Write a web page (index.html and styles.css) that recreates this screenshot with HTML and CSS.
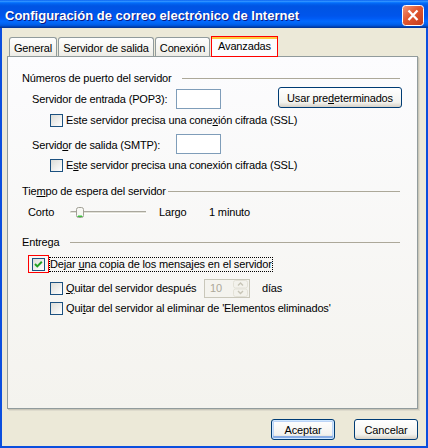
FILE: index.html
```html
<html>
<head>
    <title>Configuración de correo electrónico de Internet</title>
    <link rel="stylesheet" href="styles.css">
</head>
<body>

    <div class="window">
        <div class="titlebar">
            <span class="title">Configuración de correo electrónico de Internet</span>
            <span class="close">
                <svg width="22" height="21" viewBox="0 0 22 21">
                    <defs>
                        <linearGradient id="closeBg" x1="0" y1="0" x2="1" y2="1">
                            <stop offset="0" stop-color="#F29A7E"/>
                            <stop offset="0.45" stop-color="#E1572F"/>
                            <stop offset="1" stop-color="#C33A1A"/>
                        </linearGradient>
                    </defs>
                    <rect x="0.5" y="0.5" width="21" height="20" rx="3" fill="url(#closeBg)" stroke="#fff"/>
                    <path d="M6.5 5.5l9 9.5M15.5 5.5l-9 9.5" stroke="#fff" stroke-width="2.3"/>
                </svg>
            </span>
        </div>

        <div class="frame">
            <div class="tabs">
                <div class="tab general">General</div>
                <div class="tab outgoing">Servidor de salida</div>
                <div class="tab connection">Conexión</div>
                <div class="tab active">Avanzadas</div>
            </div>

            <div class="panel">
                <div class="group-head">
                    <span class="group-label ports">Números de puerto del servidor</span>
                    <span class="group-line"></span>
                </div>

                <div class="port-row first">
                    <span class="port-label">Servidor de entrada (POP3):</span>
                    <span class="textbox"></span>
                    <button class="btn defaults">Usar pre<u>d</u>eterminados</button>
                </div>
                <div class="check-row sub ssl-in">
                    <span class="cb"></span>
                    <span>Este servidor precisa una cone<u>x</u>ión cifrada (SSL)</span>
                </div>

                <div class="port-row second">
                    <span class="port-label">Servid<u>o</u>r de salida (SMTP):</span>
                    <span class="textbox"></span>
                </div>
                <div class="check-row sub ssl-out">
                    <span class="cb"></span>
                    <span>E<u>s</u>te servidor precisa una conexión cifrada (SSL)</span>
                </div>

                <div class="group-head timeout">
                    <span class="group-label wait">Tie<u>m</u>po de espera del servidor</span>
                    <span class="group-line"></span>
                </div>
                <div class="slider-row">
                    <span class="slider-short">Corto</span>
                    <span class="track">
                        <svg class="thumb" width="8" height="11" viewBox="0 0 8 11">
                            <rect x="0.5" y="0.5" width="7" height="10" rx="2" fill="#F7F7F3" stroke="#A19F95"/>
                            <path d="M1.5 9.5h5" stroke="#3DBE3D"/>
                            <path d="M2 8.5h4" stroke="#9BDB9B"/>
                        </svg>
                    </span>
                    <span class="slider-long">Largo</span>
                    <span>1 minuto</span>
                </div>

                <div class="group-head delivery">
                    <span class="group-label deliver">Entrega</span>
                    <span class="group-line"></span>
                </div>
                <div class="check-row keep">
                    <span class="mark">
                        <span class="cb">
                            <svg width="11" height="11" viewBox="0 0 11 11">
                                <path d="M2 5l2.3 2.4L8.8 2.8" fill="none" stroke="#21A121" stroke-width="2"/>
                            </svg>
                        </span>
                    </span>
                    <span class="focus">Dejar <u>u</u>na copia de los mensajes en el servidor</span>
                </div>
                <div class="check-row sub after-days">
                    <span class="cb"></span>
                    <span class="days-label"><u>Q</u>uitar del servidor después</span>
                    <span class="spin">
                        <span>10</span>
                        <svg class="spin-btns" width="15" height="17" viewBox="0 0 15 17">
                            <rect x="0.5" y="0.5" width="14" height="7.5" rx="2" fill="#F3F2EC" stroke="#E3E1D7"/>
                            <rect x="0.5" y="9" width="14" height="7.5" rx="2" fill="#F3F2EC" stroke="#E3E1D7"/>
                            <path d="M5 5.5l2.5-2.5 2.5 2.5M5 11l2.5 2.5 2.5-2.5" fill="none" stroke="#C7C4B6" stroke-width="1.4"/>
                        </svg>
                    </span>
                    <span class="days">días</span>
                </div>
                <div class="check-row sub on-delete">
                    <span class="cb"></span>
                    <span>Qui<u>t</u>ar del servidor al eliminar de 'Elementos eliminados'</span>
                </div>
            </div>

            <div class="buttons">
                <button class="btn default">Aceptar</button>
                <button class="btn">Cancelar</button>
            </div>
        </div>
    </div>

</body>
</html>
```

FILE: styles.css
```css
* {
    box-sizing: border-box;
}
body {
    margin: 0;
    font-family: "Liberation Sans", Arial, sans-serif;
    font-size: 11px;
    letter-spacing: -0.15px;
    color: #000;
}
u {
    text-decoration: underline;
}
.window {
    width: 428px;
    height: 448px;
    display: flex;
    flex-direction: column;
}

/* title bar */
.titlebar {
    height: 28px;
    flex: none;
    display: flex;
    align-items: flex-start;
    background: linear-gradient(to bottom, #0058EE 0%, #3593FF 4%, #288EFF 6%, #127DFF 8%, #036FFC 10%, #0262EE 14%, #0057E5 20%, #0054E3 24%, #0055EB 56%, #005BF5 66%, #026AFE 76%, #0062EF 86%, #0052D6 92%, #0040AB 96%, #003092 100%);
}
.title {
    margin-top: 8px;
    padding-left: 5px;
    font-size: 13px;
    line-height: 16px;
    font-weight: bold;
    letter-spacing: 0;
    color: #fff;
    text-shadow: 1px 1px 0 #0A1883;
}
.close {
    margin: 5px 4px 0 auto;
    width: 22px;
    height: 21px;
}
.close svg {
    display: block;
}

/* window body */
.frame {
    flex: 1;
    display: flex;
    flex-direction: column;
    background: #ECE9D8;
    border: 2px solid #0B4EDE;
    border-top: 0;
}
.tabs {
    position: relative;
    display: flex;
    align-items: flex-end;
    height: 29px;
    margin-bottom: -1px;
    padding: 8px 0 0 7px;
}
.tab {
    height: 19px;
    margin: 0 1px 1px 0;
    padding-top: 4px;
    line-height: 13px;
    text-align: center;
    white-space: nowrap;
    border: 1px solid #919B9C;
    border-bottom: 0;
    border-radius: 3px 3px 0 0;
    background: linear-gradient(#FEFEFE, #F4F3EE 70%, #ECEBE6);
}
.tab.general {
    width: 48px;
}
.tab.outgoing {
    width: 96px;
}
.tab.connection {
    width: 55px;
}
.tab.active {
    width: 67px;
    height: 21px;
    margin: 0;
    padding-top: 3px;
    border: 1px solid #f00;
    border-radius: 0;
    background: #FCFCFE;
    box-shadow: inset 0 2px 0 #FFC83C;
}
.panel {
    flex: none;
    width: 411px;
    height: 353px;
    margin-left: 5px;
    padding-top: 15px;
    border: 1px solid #919B9C;
    background: linear-gradient(#FCFCFE, #F4F3EE);
    box-shadow: 1px 1px 0 #C9C6B8, 2px 2px 0 #DEDBCD;
}

/* group headings with an etched line */
.group-head {
    display: flex;
    align-items: center;
    height: 13px;
    line-height: 13px;
    padding: 0 17px 0 14px;
}
.group-label {
    flex: none;
    white-space: nowrap;
}
.group-label.ports {
    width: 160px;
}
.group-label.wait {
    width: 146px;
}
.group-label.deliver {
    width: 48px;
}
.group-line {
    flex: 1;
    height: 1px;
    background: #ACA899;
}
.group-head.timeout {
    margin-top: 13px;
}
.group-head.delivery {
    margin-top: 17px;
}

/* port rows */
.port-row {
    display: flex;
    align-items: flex-start;
    padding: 0 15px 0 24px;
}
.port-row.first {
    margin-top: 2px;
}
.port-row.second {
    margin-top: 7px;
}
.port-label {
    width: 144px;
    line-height: 20px;
    margin-top: 1px;
    white-space: nowrap;
}
.port-row.first .port-label,
.port-row.first .textbox {
    margin-top: 2px;
}
.textbox {
    width: 45px;
    height: 20px;
    border: 1px solid #7F9DB9;
    background: #fff;
}
.btn {
    height: 21px;
    padding: 0;
    font: inherit;
    letter-spacing: inherit;
    color: #000;
    border: 1px solid #003C74;
    border-radius: 3px;
    background: linear-gradient(#FFFFFF, #F3F3EF 75%, #D6D0C5);
}
.btn.defaults {
    width: 124px;
    margin-left: auto;
}

/* checkbox rows */
.check-row {
    display: flex;
    align-items: center;
    height: 13px;
    line-height: 13px;
    white-space: nowrap;
}
.check-row.sub {
    padding-left: 42px;
}
.check-row.ssl-in {
    margin-top: 5px;
}
.check-row.ssl-out {
    margin-top: 4px;
}
.cb {
    flex: none;
    display: block;
    width: 13px;
    height: 13px;
    margin-right: 3px;
    border: 1px solid #1C5180;
    background: linear-gradient(135deg, #DCDCD7, #FFFFFF);
}
.cb svg {
    display: block;
}
.check-row.keep {
    height: 18px;
    margin-top: 6px;
    padding-left: 20px;
}
.mark {
    flex: none;
    display: flex;
    padding: 2px 3px 1px;
    border: 1px solid #f00;
}
.mark .cb {
    margin-right: 0;
}
.focus {
    padding: 1px 1px;
    outline: 1px dotted #000;
    outline-offset: -1px;
}
.check-row.after-days {
    height: 19px;
    margin-top: 6px;
}
.days-label {
    width: 138px;
}
.spin {
    flex: none;
    display: flex;
    align-items: center;
    width: 46px;
    height: 19px;
    padding-left: 5px;
    color: #ACA899;
    border: 1px solid #C9C7BA;
    background: #F4F3EE;
}
.spin-btns {
    margin-left: auto;
    margin-right: 1px;
}
.days {
    margin-left: 12px;
}
.check-row.on-delete {
    margin-top: 4px;
}

/* timeout slider */
.slider-row {
    display: flex;
    align-items: center;
    height: 13px;
    line-height: 13px;
    margin-top: 8px;
    padding-left: 20px;
}
.slider-short {
    width: 42px;
}
.track {
    position: relative;
    width: 76px;
    height: 3px;
    border-top: 1px solid #A9A79D;
    border-bottom: 1px solid #fff;
    border-radius: 2px 0 0 2px;
    background: #E2E1D8;
}
.thumb {
    position: absolute;
    left: 6px;
    top: -5px;
}
.slider-long {
    width: 50px;
    margin-left: 13px;
}

/* dialog buttons */
.buttons {
    display: flex;
    justify-content: flex-end;
    gap: 19px;
    margin-top: 10px;
    padding-right: 8px;
}
.buttons .btn {
    width: 64px;
}
.btn.default {
    box-shadow: inset 0 0 0 1px #CEE7FF, inset 0 -2px 0 1px #89ADE4, inset 0 0 0 2px #BCD4F6;
}
```
